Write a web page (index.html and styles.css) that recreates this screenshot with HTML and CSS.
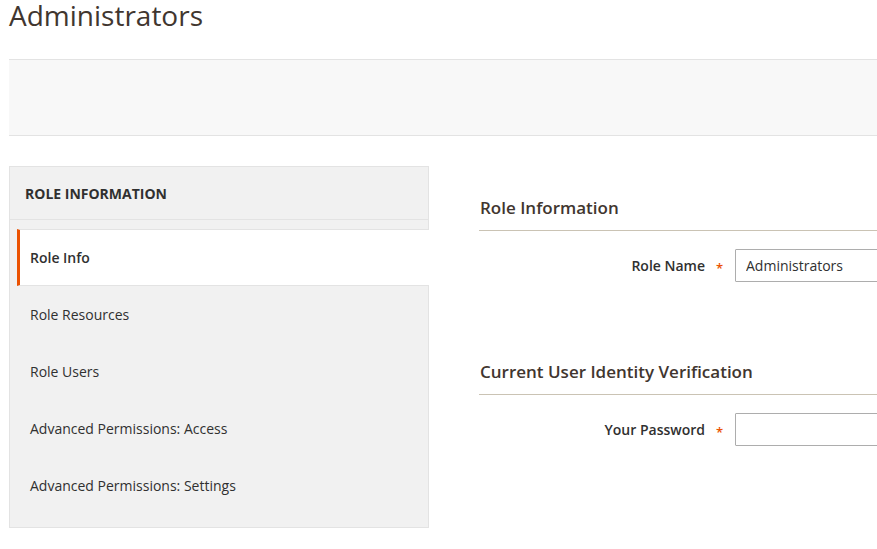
FILE: index.html
```html
<!DOCTYPE html>
<html lang="en">
<head>
<meta charset="utf-8">
<title>Administrators</title>
<link rel="stylesheet" href="styles.css">
</head>
<body>
<div class="page">
  <h1 class="page-title">Administrators</h1>
  <div class="actions-bar"></div>
  <div class="layout">
    <div class="side-nav">
      <div class="side-nav-title">ROLE INFORMATION</div>
      <ul class="side-nav-list">
        <li class="side-nav-item active"><span>Role Info</span></li>
        <li class="side-nav-item"><span>Role Resources</span></li>
        <li class="side-nav-item"><span>Role Users</span></li>
        <li class="side-nav-item"><span>Advanced Permissions: Access</span></li>
        <li class="side-nav-item"><span>Advanced Permissions: Settings</span></li>
      </ul>
    </div>
    <div class="main">
      <section class="fieldset">
        <h2 class="legend">Role Information</h2>
        <div class="field">
          <div class="field-label"><span>Role Name</span><span class="req">*</span></div>
          <div class="field-control"><input class="input" type="text" value="Administrators"></div>
        </div>
      </section>
      <section class="fieldset second">
        <h2 class="legend">Current User Identity Verification</h2>
        <div class="field">
          <div class="field-label"><span>Your Password</span><span class="req">*</span></div>
          <div class="field-control"><input class="input" type="password" value=""></div>
        </div>
      </section>
    </div>
  </div>
</div>
</body>
</html>
```

FILE: styles.css
```css
html, body {
  margin: 0;
  padding: 0;
  background: #ffffff;
  overflow: hidden;
}

body {
  font-family: "Open Sans", "DejaVu Sans", sans-serif;
  color: #303030;
  font-size: 14px;
}

.page {
  padding: 0 0 0 9px;
}

.page-title {
  margin: 0 0 29px 0;
  padding-top: 1px;
  font-size: 28px;
  line-height: 29px;
  font-weight: 400;
  color: #41362f;
}

.actions-bar {
  height: 75px;
  background: #f8f8f8;
  border-top: 1px solid #e3e3e3;
  border-bottom: 1px solid #e3e3e3;
  margin-bottom: 30px;
}

.layout {
  display: flex;
  align-items: flex-start;
  gap: 50px;
}

.side-nav {
  width: 420px;
  flex: none;
  box-sizing: border-box;
  background: #f1f1f1;
  border: 1px solid #e3e3e3;
}

.side-nav-title {
  height: 53px;
  box-sizing: border-box;
  padding: 0 15px;
  display: flex;
  align-items: center;
  font-size: 14px;
  font-weight: 700;
  color: #303030;
  border-bottom: 1px solid #e3e3e3;
}

.side-nav-list {
  list-style: none;
  margin: 0;
  padding: 9px 0 13px 0;
}

.side-nav-item {
  height: 57px;
  box-sizing: border-box;
  margin-left: 7px;
  border-left: 3px solid transparent;
  border-top: 1px solid transparent;
  border-bottom: 1px solid transparent;
  padding-left: 10px;
  display: flex;
  align-items: center;
  font-size: 14px;
  color: #303030;
}

.side-nav-item.active {
  background: #ffffff;
  border-left-color: #eb5202;
  border-top-color: #e3e3e3;
  border-bottom-color: #e3e3e3;
  margin-right: -1px;
  font-weight: 600;
}

.main {
  flex: 1;
  min-width: 0;
  overflow: hidden;
}

.fieldset {
  margin-top: 30px;
}

.fieldset.second {
  margin-top: 78px;
}

.legend {
  margin: 0;
  font-size: 17px;
  line-height: 24px;
  font-weight: 600;
  color: #41362f;
  padding: 0 0 10px 1px;
  border-bottom: 1px solid #cac3b4;
}

.field {
  display: flex;
  align-items: center;
  margin-top: 18px;
}

.field-label {
  width: 256px;
  flex: none;
  box-sizing: border-box;
  padding-right: 12px;
  display: flex;
  justify-content: flex-end;
  align-items: center;
  font-size: 14px;
  font-weight: 600;
  color: #303030;
}

.req {
  color: #eb5202;
  font-size: 13px;
  margin-left: 11px;
  width: 7px;
  position: relative;
  top: 2px;
}

.field-control {
  flex: none;
}

.input {
  display: block;
  width: 400px;
  height: 33px;
  box-sizing: border-box;
  border: 1px solid #adadad;
  border-radius: 1px;
  padding: 0 10px;
  font-family: "Open Sans", "DejaVu Sans", sans-serif;
  font-size: 14px;
  color: #303030;
  background: #ffffff;
  outline: none;
}
```
